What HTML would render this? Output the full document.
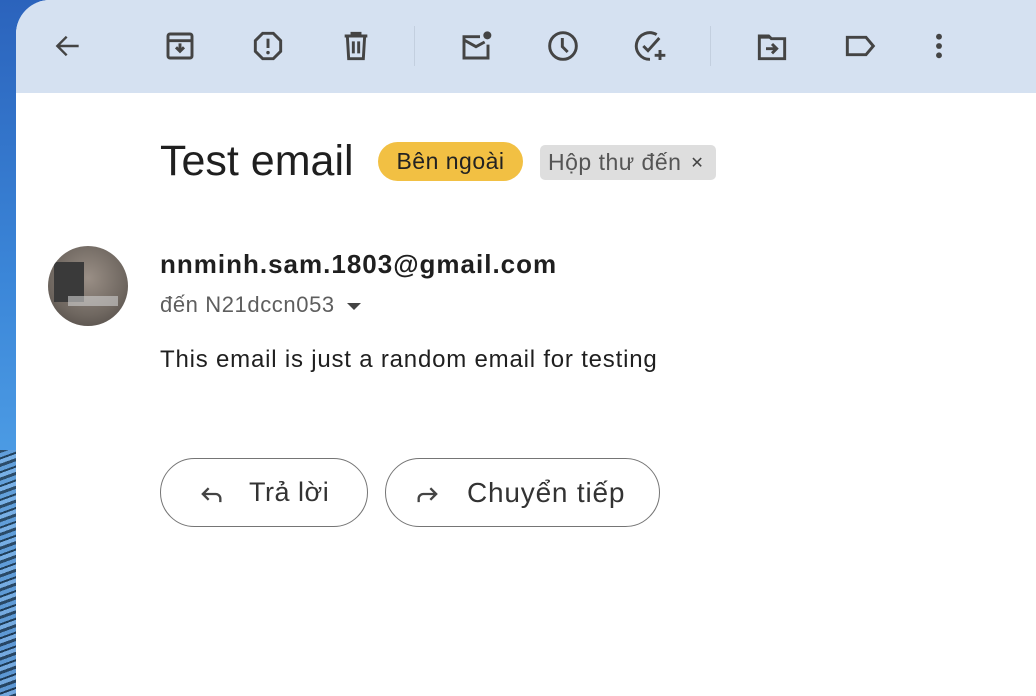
<!DOCTYPE html>
<html><head><meta charset="utf-8"><style>
body{margin:0;width:1036px;height:696px;overflow:hidden;position:relative;font-family:"Liberation Sans",sans-serif;background:linear-gradient(#2b63bc,#3b86d8 40%,#4f9fe6 70%,#3b7ec8);}
.strip-tree{position:absolute;left:0;top:450px;width:16px;height:246px;background:repeating-linear-gradient(160deg,#1d2a35 0 3px,#6aa0d6 3px 7px,#0f1a22 7px 9px,#8ab8e6 9px 13px);opacity:.7}
.panel{position:absolute;left:16px;top:0;right:0;bottom:0;background:#fff;border-top-left-radius:34px;overflow:hidden}
.tb{height:93px;background:#d5e1f1;position:relative}
.tb svg{position:absolute;top:30px;width:32px;height:32px}
.sep{position:absolute;top:26px;width:1px;height:40px;background:#c3cfdf}
.t{position:absolute;white-space:nowrap}
.btn{position:absolute;top:458px;height:69px;border:1.5px solid #757575;border-radius:35px;box-sizing:border-box;font-size:27px;color:#333}
</style></head><body>
<div class="strip-tree"></div>
<div class="panel">
<div class="tb">
<svg style="left:36px" viewBox="0 0 24 24"><path d="M20 12H5M11 5l-7 7 7 7" fill="none" stroke="#444" stroke-width="1.8"/></svg>
<svg style="left:148px" viewBox="0 0 24 24"><rect x="3" y="3" width="18" height="18" rx="1.5" fill="none" stroke="#444" stroke-width="2.2"/><path d="M3 8h18M12 10v6M9 13l3 3 3-3" fill="none" stroke="#444" stroke-width="2.2"/></svg>
<svg style="left:236px" viewBox="0 0 24 24"><path d="M8 2.5h8l5.5 5.5v8L16 21.5H8L2.5 16V8z" fill="none" stroke="#444" stroke-width="2.2"/><path d="M12 6.5v7" stroke="#444" stroke-width="2.2"/><circle cx="12" cy="17" r="1.3" fill="#444"/></svg>
<svg style="left:324px" viewBox="0 0 24 24"><path d="M3.5 4.5h17M9 4.5V2.5h6v2M5.5 4.5l1 17h11l1-17M10 8.5v9M14 8.5v9" fill="none" stroke="#444" stroke-width="2.2"/></svg>
<div class="sep" style="left:398px"></div>
<svg style="left:444px" viewBox="0 0 24 24"><path d="M15 5H3v16h18V11" fill="none" stroke="#444" stroke-width="2.2"/><path d="M3 7.5l9 5 6.5-3.5" fill="none" stroke="#444" stroke-width="2.2"/><circle cx="20.5" cy="4" r="3" fill="#444"/></svg>
<svg style="left:531px" viewBox="0 0 24 24"><circle cx="12" cy="12" r="10" fill="none" stroke="#444" stroke-width="2.2"/><path d="M11.5 6v6.5l4 4" fill="none" stroke="#444" stroke-width="2.2"/></svg>
<svg style="left:618px" viewBox="0 0 24 24"><path d="M17 3.5A10 10 0 1 0 12 22" fill="none" stroke="#444" stroke-width="2.2"/><path d="M7 12l3.5 3.5L19 6M19.5 15v7.5M15.5 19h8" fill="none" stroke="#444" stroke-width="2.2"/></svg>
<div class="sep" style="left:694px"></div>
<svg style="left:740px" viewBox="0 0 24 24"><path d="M2.5 4.5h7l2 2h10v15h-19z" fill="none" stroke="#444" stroke-width="2.2"/><path d="M2.5 4.5h7l2 2h-9z" fill="#444"/><path d="M7.5 14h8M12 10.5l3.5 3.5-3.5 3.5" fill="none" stroke="#444" stroke-width="2.2"/></svg>
<svg style="left:828px" viewBox="0 0 24 24"><path d="M2.5 5.5h14l5.5 6.5-5.5 6.5h-14z" fill="none" stroke="#444" stroke-width="2.2"/></svg>
<svg style="left:907px" viewBox="0 0 24 24"><circle cx="12" cy="5" r="2.2" fill="#444"/><circle cx="12" cy="12" r="2.2" fill="#444"/><circle cx="12" cy="19" r="2.2" fill="#444"/></svg>
</div>
<div class="t" style="left:144px;top:137px;font-size:43px;color:#1f1f1f">Test email</div>
<div class="t" style="left:362px;top:142px;width:145px;height:39px;background:#f2c043;border-radius:20px;font-size:23px;letter-spacing:0.5px;line-height:39px;text-align:center;color:#222">Bên ngoài</div>
<div class="t" style="left:524px;top:145px;width:176px;height:35px;background:#dedede;border-radius:5px;font-size:23px;letter-spacing:0.5px;line-height:35px;color:#555;padding-left:8px;box-sizing:border-box">Hộp thư đến <span style="font-size:16px;color:#444;margin-left:2px;position:relative;top:-2px">✕</span></div>
<div class="t" style="left:32px;top:246px;width:80px;height:80px;border-radius:50%;background:radial-gradient(circle at 50% 40%,#9a8f86,#6f6760 60%,#4a4440);overflow:hidden"><div style="position:absolute;left:6px;top:16px;width:30px;height:40px;background:#3a3a3a"></div><div style="position:absolute;left:20px;top:50px;width:50px;height:10px;background:#cfcfcf;opacity:.6"></div></div>
<div class="t" style="left:144px;top:249px;font-size:26px;letter-spacing:1px;font-weight:bold;color:#1f1f1f">nnminh.sam.1803@gmail.com</div>
<div class="t" style="left:144px;top:292px;font-size:22px;letter-spacing:0.6px;color:#5e5e5e">đến N21dccn053 <span style="display:inline-block;width:0;height:0;border-left:7px solid transparent;border-right:7px solid transparent;border-top:7px solid #444;vertical-align:middle;margin-left:6px"></span></div>
<div class="t" style="left:144px;top:346px;font-size:24px;letter-spacing:0.8px;color:#1f1f1f">This email is just a random email for testing</div>
<div class="btn" style="left:144px;width:208px"><svg style="position:absolute;left:36px;top:21px" width="28" height="28" viewBox="0 0 24 24"><path d="M20 19v-3a4 4 0 0 0-4-4H5M10 7l-5 5 5 5" fill="none" stroke="#444" stroke-width="2"/></svg><span style="position:absolute;left:88px;top:18px;letter-spacing:0.5px">Trả lời</span></div>
<div class="btn" style="left:369px;width:275px"><svg style="position:absolute;left:28px;top:21px" width="28" height="28" viewBox="0 0 24 24"><path d="M4 19v-3a4 4 0 0 1 4-4h11M14 7l5 5-5 5" fill="none" stroke="#444" stroke-width="2"/></svg><span style="position:absolute;left:81px;top:18px;font-size:28px;letter-spacing:0.8px">Chuyển tiếp</span></div>
</div>
</body></html>
